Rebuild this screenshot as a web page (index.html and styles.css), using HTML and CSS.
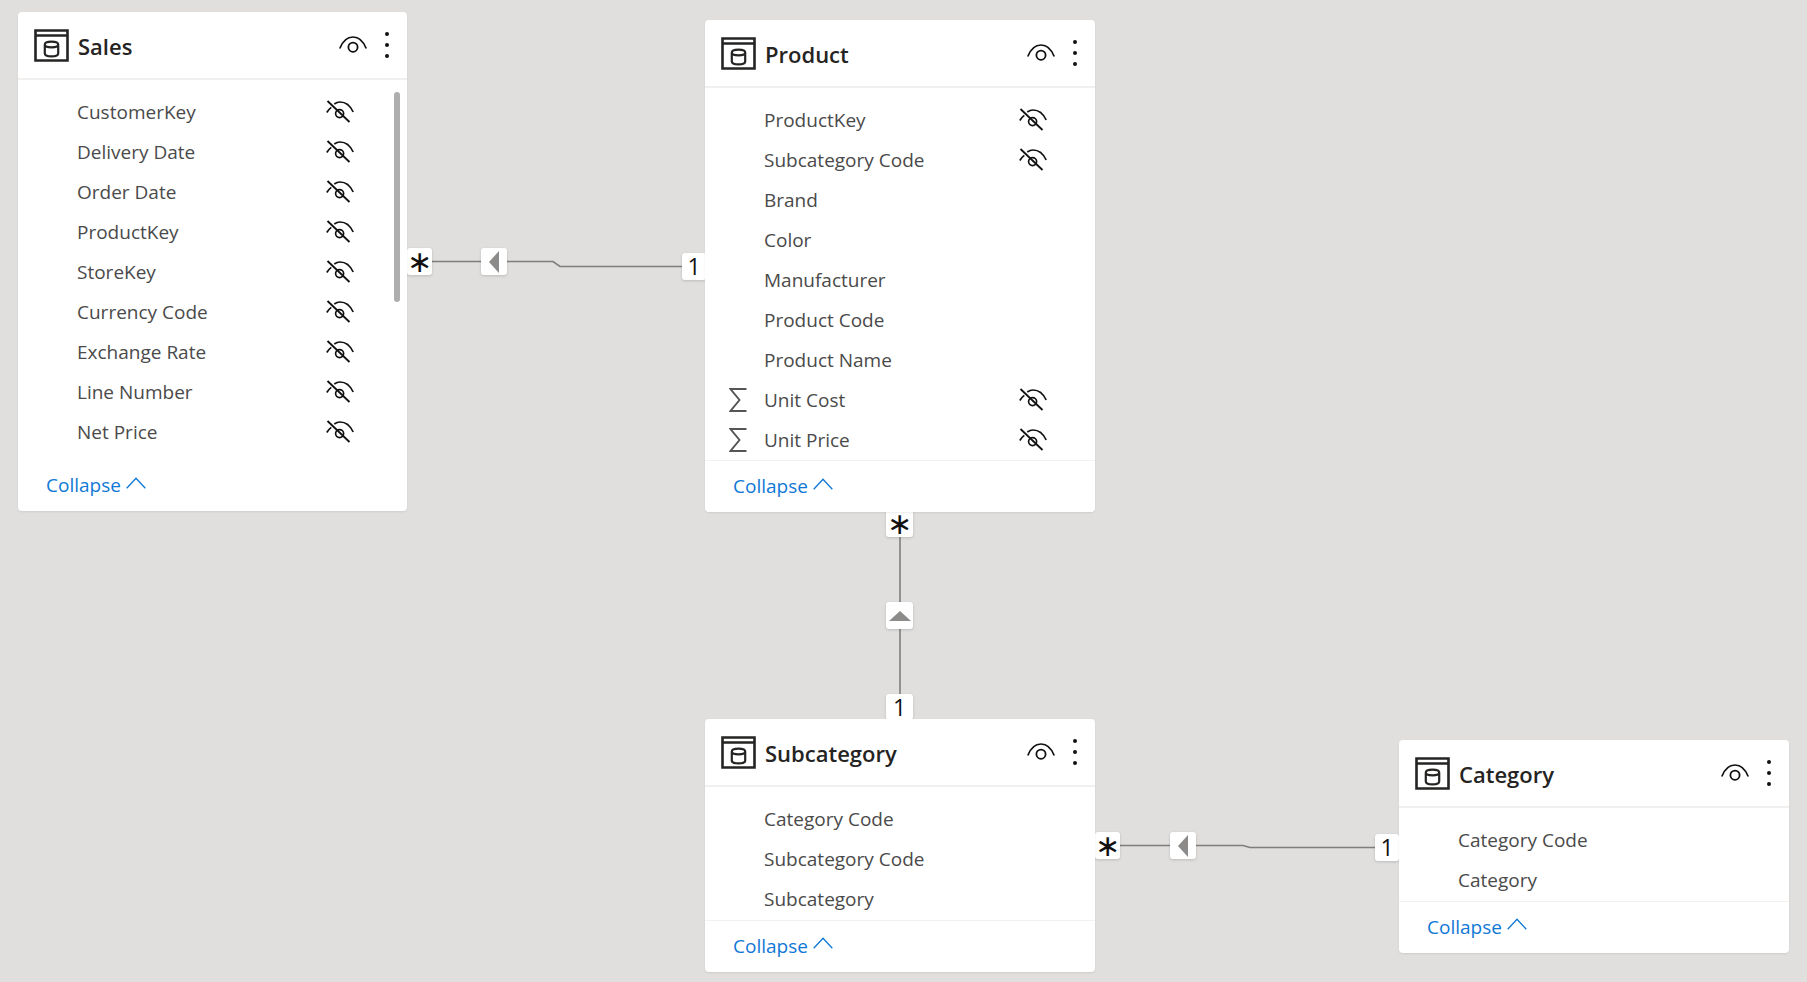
FILE: index.html
```html
<!DOCTYPE html>
<html lang="en">
<head>
<meta charset="utf-8">
<title>Model view</title>
<link rel="stylesheet" href="styles.css">
</head>
<body>
<svg class="defs" width="0" height="0" aria-hidden="true">
  <symbol id="i-table" viewBox="0 0 35 33">
    <path d="M1.500 1.500H33.500V31.500H1.500Z M1.500 6.500H33.500" fill="none" stroke="#252423" stroke-width="2.600"/>
    <path d="M10.800 15.500C10.800 11.600 24.200 11.600 24.200 15.500V24.500C24.200 28.400 10.800 28.400 10.800 24.500Z M10.800 15.500C10.800 19.200 24.200 19.200 24.200 15.500" fill="none" stroke="#252423" stroke-width="2.200"/>
  </symbol>
  <symbol id="i-eye" viewBox="0 0 28 17">
    <path d="M.8 12.500C4 4.200 9 1 14 1S24 4.200 27.200 12.500" fill="none" stroke="#111" stroke-width="1.700"/>
    <circle cx="14" cy="11.200" r="4.600" fill="none" stroke="#111" stroke-width="1.800"/>
  </symbol>
  <symbol id="i-hidden" viewBox="0 0 28 23">
    <path d="M.8 12.500C2 10.500 3.400 8.800 5.300 7.400M8.300 4C10 2.800 12.200 2 14 2 19 2 24 5 27.200 12" fill="none" stroke="#111" stroke-width="1.700"/>
    <circle cx="13.600" cy="13.600" r="4" fill="none" stroke="#111" stroke-width="1.700"/>
    <path d="M1.500 1 23.500 22" fill="none" stroke="#111" stroke-width="1.800"/>
  </symbol>
  <symbol id="i-sigma" viewBox="0 0 18 24">
    <path d="M17.500 1H1.500L10.500 12 1.500 23H17.500" fill="none" stroke="#555" stroke-width="1.900"/>
  </symbol>
  <symbol id="i-chev" viewBox="0 0 20 12">
    <path d="M.7 11.300 10 1.200 19.300 11.300" fill="none" stroke="#0f78d6" stroke-width="1.300"/>
  </symbol>
</svg>

<main class="canvas">
  <svg class="wires" width="1807" height="982" aria-hidden="true">
    <path d="M432 261.500H553L560 266.500H682"/>
    <path d="M900 537V694"/>
    <path d="M1120 845.500H1243L1250 847.500H1375"/>
  </svg>

  <span class="badge b-star b-s1">∗</span>
  <span class="badge b-arrow b-a1"><i class="tri tri-left"></i></span>
  <span class="badge b-one b-o1">1</span>

  <span class="badge b-star b-s2">∗</span>
  <span class="badge b-arrow b-a2"><i class="tri tri-up"></i></span>
  <span class="badge b-one b-o2">1</span>

  <span class="badge b-star b-s3">∗</span>
  <span class="badge b-arrow b-a3"><i class="tri tri-left"></i></span>
  <span class="badge b-one b-o3">1</span>

  <section class="card card-sales">
    <header class="head">
      <svg class="ic-table"><use href="#i-table"/></svg>
      <h2 class="title">Sales</h2>
      <svg class="ic-eye"><use href="#i-eye"/></svg>
      <span class="dots"><i></i><i></i><i></i></span>
    </header>
    <div class="body body-scroll">
      <span class="scrollbar"></span>
      <div class="row"><span class="slot"></span><span class="name">CustomerKey</span><svg class="ic-hidden"><use href="#i-hidden"/></svg></div>
      <div class="row"><span class="slot"></span><span class="name">Delivery Date</span><svg class="ic-hidden"><use href="#i-hidden"/></svg></div>
      <div class="row"><span class="slot"></span><span class="name">Order Date</span><svg class="ic-hidden"><use href="#i-hidden"/></svg></div>
      <div class="row"><span class="slot"></span><span class="name">ProductKey</span><svg class="ic-hidden"><use href="#i-hidden"/></svg></div>
      <div class="row"><span class="slot"></span><span class="name">StoreKey</span><svg class="ic-hidden"><use href="#i-hidden"/></svg></div>
      <div class="row"><span class="slot"></span><span class="name">Currency Code</span><svg class="ic-hidden"><use href="#i-hidden"/></svg></div>
      <div class="row"><span class="slot"></span><span class="name">Exchange Rate</span><svg class="ic-hidden"><use href="#i-hidden"/></svg></div>
      <div class="row"><span class="slot"></span><span class="name">Line Number</span><svg class="ic-hidden"><use href="#i-hidden"/></svg></div>
      <div class="row"><span class="slot"></span><span class="name">Net Price</span><svg class="ic-hidden"><use href="#i-hidden"/></svg></div>
    </div>
    <footer class="foot foot-plain"><span class="link">Collapse</span><svg class="ic-chev"><use href="#i-chev"/></svg></footer>
  </section>

  <section class="card card-product">
    <header class="head">
      <svg class="ic-table"><use href="#i-table"/></svg>
      <h2 class="title">Product</h2>
      <svg class="ic-eye"><use href="#i-eye"/></svg>
      <span class="dots"><i></i><i></i><i></i></span>
    </header>
    <div class="body">
      <div class="row"><span class="slot"></span><span class="name">ProductKey</span><svg class="ic-hidden"><use href="#i-hidden"/></svg></div>
      <div class="row"><span class="slot"></span><span class="name">Subcategory Code</span><svg class="ic-hidden"><use href="#i-hidden"/></svg></div>
      <div class="row"><span class="slot"></span><span class="name">Brand</span></div>
      <div class="row"><span class="slot"></span><span class="name">Color</span></div>
      <div class="row"><span class="slot"></span><span class="name">Manufacturer</span></div>
      <div class="row"><span class="slot"></span><span class="name">Product Code</span></div>
      <div class="row"><span class="slot"></span><span class="name">Product Name</span></div>
      <div class="row"><span class="slot"><svg class="ic-sigma"><use href="#i-sigma"/></svg></span><span class="name">Unit Cost</span><svg class="ic-hidden"><use href="#i-hidden"/></svg></div>
      <div class="row"><span class="slot"><svg class="ic-sigma"><use href="#i-sigma"/></svg></span><span class="name">Unit Price</span><svg class="ic-hidden"><use href="#i-hidden"/></svg></div>
    </div>
    <footer class="foot"><span class="link">Collapse</span><svg class="ic-chev"><use href="#i-chev"/></svg></footer>
  </section>

  <section class="card card-subcategory">
    <header class="head">
      <svg class="ic-table"><use href="#i-table"/></svg>
      <h2 class="title">Subcategory</h2>
      <svg class="ic-eye"><use href="#i-eye"/></svg>
      <span class="dots"><i></i><i></i><i></i></span>
    </header>
    <div class="body">
      <div class="row"><span class="slot"></span><span class="name">Category Code</span></div>
      <div class="row"><span class="slot"></span><span class="name">Subcategory Code</span></div>
      <div class="row"><span class="slot"></span><span class="name">Subcategory</span></div>
    </div>
    <footer class="foot"><span class="link">Collapse</span><svg class="ic-chev"><use href="#i-chev"/></svg></footer>
  </section>

  <section class="card card-category">
    <header class="head">
      <svg class="ic-table"><use href="#i-table"/></svg>
      <h2 class="title">Category</h2>
      <svg class="ic-eye"><use href="#i-eye"/></svg>
      <span class="dots"><i></i><i></i><i></i></span>
    </header>
    <div class="body">
      <div class="row"><span class="slot"></span><span class="name">Category Code</span></div>
      <div class="row"><span class="slot"></span><span class="name">Category</span></div>
    </div>
    <footer class="foot"><span class="link">Collapse</span><svg class="ic-chev"><use href="#i-chev"/></svg></footer>
  </section>
</main>
</body>
</html>
```

FILE: styles.css
```css
* { box-sizing: border-box; }

html, body {
  margin: 0;
  height: 100%;
  overflow: hidden;
}

body {
  background: #e0dfdd;
  font-family: "Open Sans", "Noto Sans", "Liberation Sans", sans-serif;
}

.defs { position: absolute; }

.canvas {
  position: relative;
  width: 1807px;
  height: 982px;
  overflow: hidden;
}

/* connectors */
.wires {
  position: absolute;
  left: 0;
  top: 0;
}

.wires path {
  fill: none;
  stroke: #7f7e7c;
  stroke-width: 1.6;
}

.badge {
  position: absolute;
  display: flex;
  align-items: center;
  justify-content: center;
  background: #fff;
  border-radius: 3px;
  box-shadow: 0 1px 3px rgba(0, 0, 0, .16);
  color: #111;
}

.b-star {
  width: 25px;
  height: 27px;
  font-family: "DejaVu Sans", sans-serif;
  font-size: 30px;
  line-height: 27px;
}

.b-arrow { width: 26px; height: 27px; }

.b-one {
  width: 24px;
  height: 27px;
  font-size: 23px;
  line-height: 27px;
}

.b-s1 { left: 407px; top: 248px; }
.b-a1 { left: 481px; top: 248px; }
.b-o1 { left: 682px; top: 253px; }

.b-s2 { left: 886px; top: 510px; width: 27px; height: 27px; }
.b-a2 { left: 886px; top: 602px; width: 27px; }
.b-o2 { left: 886px; top: 694px; width: 27px; height: 26px; }

.b-s3 { left: 1095px; top: 832px; }
.b-a3 { left: 1170px; top: 832px; }
.b-o3 { left: 1375px; top: 834px; }

.tri { display: block; width: 0; height: 0; }

.tri-left {
  border-top: 11px solid transparent;
  border-bottom: 11px solid transparent;
  border-right: 10px solid #8c8b89;
}

.tri-up {
  border-left: 11px solid transparent;
  border-right: 11px solid transparent;
  border-bottom: 10px solid #8c8b89;
}

/* table cards */
.card {
  position: absolute;
  width: 390px;
  background: #fff;
  border-radius: 4px;
  display: flex;
  flex-direction: column;
  box-shadow: 0 1px 2px rgba(0, 0, 0, .08);
}

.card-sales { left: 18px; top: 12px; width: 389px; }
.card-product { left: 705px; top: 20px; }
.card-subcategory { left: 705px; top: 719px; }
.card-category { left: 1399px; top: 740px; }

.head {
  flex: none;
  height: 68px;
  display: flex;
  align-items: center;
  padding: 0 16px;
  border-bottom: 2px solid #f1f0ef;
}

.ic-table { width: 35px; height: 33px; flex: none; margin-top: 1px; }

.title {
  margin: 2px 0 0 9px;
  flex: 1;
  font-size: 22px;
  font-weight: 600;
  color: #252423;
  line-height: 30px;
}

.ic-eye { width: 28px; height: 17px; flex: none; margin: -2px -2px 0 0; }

.dots {
  flex: none;
  margin: 0 2px 0 20px;
  width: 4px;
  display: flex;
  flex-direction: column;
  gap: 7px;
}

.dots i {
  display: block;
  width: 4px;
  height: 4px;
  border-radius: 50%;
  background: #111;
}

.body { position: relative; padding-top: 13px; }
.body-scroll { height: 379px; }

.scrollbar {
  position: absolute;
  left: 376px;
  top: 12px;
  width: 6px;
  height: 210px;
  border-radius: 3px;
  background: #aeaeae;
}

.row {
  height: 39.9px;
  display: flex;
  align-items: center;
  padding-right: 48px;
}

.body-scroll .row { padding-right: 53px; }

.slot {
  flex: none;
  width: 59px;
  padding-left: 24px;
  display: flex;
}

.name {
  flex: 1;
  font-size: 19px;
  color: #4a4a4a;
  white-space: nowrap;
  margin-bottom: 1px;
}

.ic-hidden { width: 28px; height: 23px; flex: none; margin-top: -2px; }
.ic-sigma { width: 18px; height: 24px; display: block; }

.foot {
  flex: none;
  height: 52px;
  display: flex;
  align-items: center;
  gap: 5px;
  padding: 0 0 0 28px;
  border-top: 1px solid #f3f2f1;
}

.foot-plain { border-top-color: transparent; }

.link {
  font-size: 19px;
  color: #0f78d6;
  line-height: 26px;
  margin-bottom: 1px;
}

.ic-chev { width: 20px; height: 12px; margin-top: -6px; flex: none; }
```
